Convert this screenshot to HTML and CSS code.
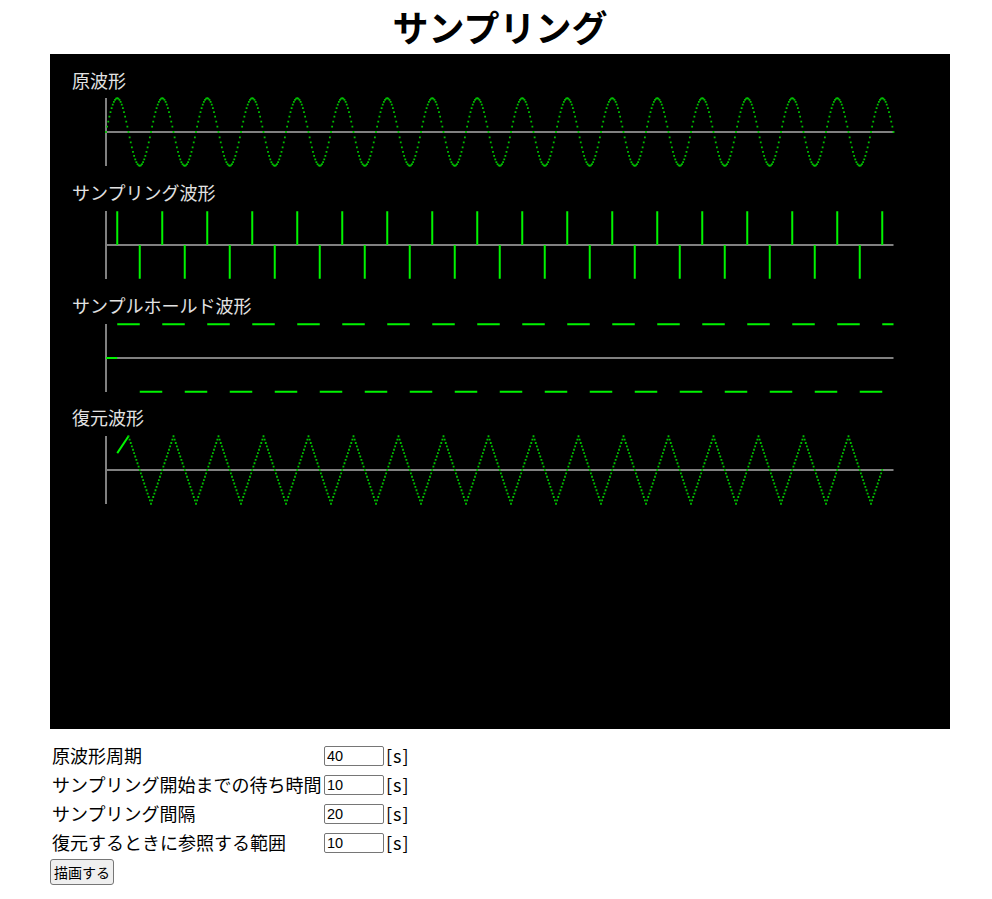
FILE: index.html
```html
<!DOCTYPE html>
<html lang="ja">
<head>
<meta charset="utf-8">
<title>サンプリング</title>
<link rel="stylesheet" href="styles.css">
</head>
<body>
<div class="page">
  <h1 class="title">サンプリング</h1>
  <svg class="scope" width="900" height="675" viewBox="0 0 900 675">
    <rect class="scope-bg" width="900" height="675"/>
    <g class="labels">
      <text x="22" y="33.5">原波形</text>
      <text x="22" y="146">サンプリング波形</text>
      <text x="22" y="258.5">サンプルホールド波形</text>
      <text x="22" y="371">復元波形</text>
    </g>
    <g class="axes">
      <path d="M56 44V112M56 78H843.5"/>
      <path d="M56 157V225M56 191H843.5"/>
      <path d="M56 270V338M56 304H843.5"/>
      <path d="M56 382V450M56 416H843.5"/>
    </g>
    <path id="w-orig" class="dots" d=""/>
    <path id="w-samp" class="stems" d=""/>
    <path id="w-hold" class="stems" d=""/>
    <path id="w-rest-line" class="stems" d=""/>
    <path id="w-rest" class="dots" d=""/>
  </svg>
  <form class="params">
    <div class="row"><label class="name">原波形周期</label><input class="num" type="text" value="40"><span class="unit">[s]</span></div>
    <div class="row"><label class="name">サンプリング開始までの待ち時間</label><input class="num" type="text" value="10"><span class="unit">[s]</span></div>
    <div class="row"><label class="name">サンプリング間隔</label><input class="num" type="text" value="20"><span class="unit">[s]</span></div>
    <div class="row"><label class="name">復元するときに参照する範囲</label><input class="num" type="text" value="10"><span class="unit">[s]</span></div>
    <button class="draw" type="button">描画する</button>
  </form>
</div>
<script src="script.js"></script>
</body>
</html>
```

FILE: styles.css
```css
html, body {
  margin: 0;
  padding: 0;
  background: #fff;
}

body {
  font-family: "Noto Sans CJK JP", "Noto Sans", sans-serif;
  color: #000;
}

.page {
  width: 900px;
  margin-left: 50px;
}

.title {
  margin: 0 0 2px;
  font-size: 36px;
  font-weight: 700;
  line-height: 52px;
  text-align: center;
}

.scope {
  display: block;
}

.scope-bg {
  fill: #000;
}

.labels text {
  font-family: "Noto Sans CJK JP", sans-serif;
  font-size: 18px;
  fill: #e2e2e2;
}

.axes path {
  fill: none;
  stroke: #808080;
  stroke-width: 2;
}

.dots {
  fill: #00c000;
  stroke: none;
}

.stems {
  fill: none;
  stroke: #00f400;
  stroke-width: 2;
}

.params {
  margin: 13px 0 0;
  display: flex;
  flex-direction: column;
  align-items: flex-start;
  gap: 2px;
}

.row {
  height: 27px;
  display: flex;
  align-items: center;
}

.name {
  width: 272px;
  padding-left: 2px;
  font-size: 18px;
  line-height: 27px;
  white-space: nowrap;
}

.num {
  box-sizing: border-box;
  width: 60px;
  height: 20px;
  margin: 0;
  padding: 1px 2px;
  border: 1px solid #767676;
  border-radius: 2px;
  font-family: "Liberation Sans", Arial, sans-serif;
  font-size: 14.5px;
  color: #000;
  background: #fff;
}

.unit {
  padding-left: 2px;
  font-size: 18px;
  letter-spacing: 1px;
  line-height: 27px;
}

.draw {
  margin-top: 1px;
  height: 26px;
  padding: 0 3px;
  border: 1px solid #767676;
  border-radius: 3px;
  background: #efefef;
  font-family: "Noto Sans CJK JP", sans-serif;
  font-size: 14px;
  color: #000;
}
```

FILE: script.js
```js
(function () {
  var X0 = 56, K = 1.125, A = 33.75;
  var CY = [78, 191, 304, 416];
  function x(t) { return X0 + K * t; }
  function f(n) { return n.toFixed(2); }
  function dot(px, py) {
    return "M" + f(px - 0.9) + " " + f(py - 0.9) + "h1.8v1.8h-1.8z";
  }

  // original sine wave, period 40
  var d = "";
  for (var t = 0; t <= 700; t++) {
    d += dot(x(t), CY[0] - A * Math.sin(2 * Math.PI * t / 40));
  }
  document.getElementById("w-orig").setAttribute("d", d);

  // sampling and hold
  var s = "";
  var h = "M" + f(x(0)) + " " + CY[2] + "H" + f(x(10));
  for (var k = 10; k <= 690; k += 20) {
    var v = Math.round(Math.sin(2 * Math.PI * k / 40));
    s += "M" + f(x(k)) + " " + CY[1] + "V" + f(CY[1] - A * v);
    h += "M" + f(x(k)) + " " + f(CY[2] - A * v) + "H" + f(x(Math.min(k + 20, 700)));
  }
  document.getElementById("w-samp").setAttribute("d", s);
  document.getElementById("w-hold").setAttribute("d", h);

  // restored (triangle) wave
  document.getElementById("w-rest-line").setAttribute("d",
    "M" + f(x(10)) + " " + f(CY[3] - A * 0.5) + "L" + f(x(20)) + " " + f(CY[3] - A));
  var r = "";
  for (var u = 20; u <= 690; u++) {
    var p = (u - 20) % 40;
    var val = p < 20 ? 1 - 0.1 * p : -1 + 0.1 * (p - 20);
    r += dot(x(u), CY[3] - A * val);
  }
  document.getElementById("w-rest").setAttribute("d", r);
})();
```
